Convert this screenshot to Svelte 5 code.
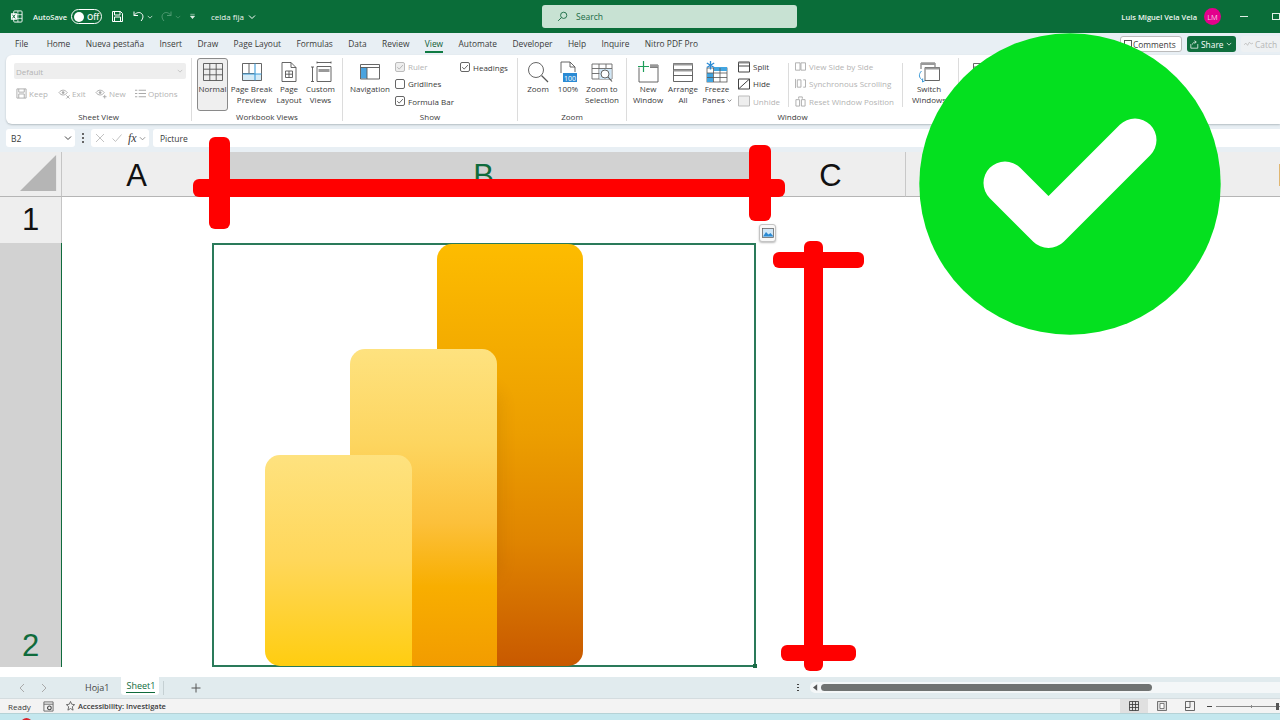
<script lang="ts">
  const tabs = ["File", "Home", "Nueva pestaña", "Insert", "Draw", "Page Layout", "Formulas", "Data", "Review", "View", "Automate", "Developer", "Help", "Inquire", "Nitro PDF Pro"];
</script>

{#snippet check(on: boolean, off = false)}
  <span class="box" class:off>
    {#if on}<svg viewBox="0 0 10 10" width="8" height="8"><path d="M1.5 5.2 4 7.6 8.6 2.6" fill="none" stroke={off ? "#aaa" : "#444"} stroke-width="1"/></svg>{/if}
  </span>
{/snippet}

{#snippet chevron(color = "#fff", size = 7)}
  <svg viewBox="0 0 8 8" width={size} height={size}><path d="M1 2.5 4 5.5 7 2.5" fill="none" stroke={color} stroke-width="1"/></svg>
{/snippet}

<div class="page">
  <header class="titlebar">
    <svg class="xl" viewBox="0 0 14 14" width="13" height="13">
      <rect x="4" y="1" width="9" height="12" rx="1" fill="none" stroke="#fff" stroke-width="1"/>
      <path d="M8.5 1v12M4 5h9M4 9h9" stroke="#fff" stroke-width=".8"/>
      <rect x="1" y="3.5" width="6.5" height="7" fill="#fff"/>
      <path d="M2.6 5l3 4M5.6 5l-3 4" stroke="#0b6b38" stroke-width="1"/>
    </svg>
    <span class="autosave">AutoSave</span>
    <span class="toggle"><i></i>Off</span>
    <svg class="qat save" viewBox="0 0 13 13" width="13" height="13"><path d="M1.5 1.5h8l2 2v8h-10zM3.5 1.5V5H9V1.5M3.5 11.5V7h6v4.5" fill="none" stroke="#fff" stroke-width="1"/></svg>
    <svg class="qat undo" viewBox="0 0 13 13" width="13" height="13"><path d="M2 1.5v4h4M2 5.5c2-3 5.5-3.8 7.5-2 2.2 2 1.8 5-.5 7.5" fill="none" stroke="#fff" stroke-width="1"/></svg>
    <span class="chev1">{@render chevron("#dfeee5", 6)}</span>
    <svg class="qat redo" viewBox="0 0 13 13" width="13" height="13"><path d="M11 1.5v4H7M11 5.5c-2-3-5.5-3.8-7.5-2-2.2 2-1.8 5 .5 7.5" fill="none" stroke="#4f9a72" stroke-width="1"/></svg>
    <span class="chev2">{@render chevron("#4f9a72", 6)}</span>
    <svg class="chev3" viewBox="0 0 8 8" width="7" height="7"><path d="M1.5 1.5h5M1.5 3.5h5L4 6.5z" fill="#dfeee5" stroke="#dfeee5" stroke-width=".6"/></svg>
    <span class="docname">celda fija</span>
    <span class="chev4">{@render chevron("#fff", 8)}</span>
    <div class="search">
      <svg viewBox="0 0 12 12" width="11" height="11"><circle cx="7.3" cy="4.7" r="3.4" fill="none" stroke="#1a6b45" stroke-width="1"/><path d="M4.8 7.2 1.2 10.8" stroke="#1a6b45" stroke-width="1"/></svg>
      <span>Search</span>
    </div>
    <span class="user">Luis Miguel Vela Vela</span>
    <span class="avatar">LM</span>
    <span class="minimize"></span>
    <span class="restore"></span>
  </header>

  <nav class="tabs">
    {#each tabs as tab}
      <span class="tab" class:current={tab === "View"}>{tab}</span>
    {/each}
    <div class="tab-actions">
      <span class="comments"><i></i>Comments</span>
      <span class="share">
        <svg viewBox="0 0 11 11" width="9" height="9"><path d="M1 5v5h8.5V5M3 5.5c.2-2 1.8-3 4-3M5.5.8 7.7 2.5 5.5 4.3" fill="none" stroke="#fff" stroke-width=".9"/></svg>
        Share {@render chevron("#fff", 6)}
      </span>
      <span class="catch">
        <svg viewBox="0 0 10 8" width="9" height="8"><path d="M0 5 2 3 4 5.5 6 2 8 4 10 3" fill="none" stroke="#bbb" stroke-width=".9"/></svg>
        Catch
      </span>
    </div>
  </nav>

  <section class="ribbon">
    <div class="group g-sheet">
      <div class="cmds sheet-cmds">
        <div class="dropdown"><span>Default</span>{@render chevron("#bbb", 6)}</div>
        <div class="sheet-row">
          <span class="dim"><svg viewBox="0 0 12 12" width="11" height="11"><path d="M1 1h10v10H1zM3 1v3.5h6V1M3 11V6.5h6V11" fill="none" stroke="#aaa"/></svg>Keep</span>
          <span class="dim"><svg viewBox="0 0 14 12" width="13" height="11"><path d="M1 5c2.5-3.5 6.5-3.5 9 0-2.5 3.5-6.5 3.5-9 0z" fill="none" stroke="#aaa"/><circle cx="5.5" cy="5" r="1.5" fill="#aaa"/><path d="M9 8l3.5 3.5M12.500 8 9 11.500" stroke="#aaa"/></svg>Exit</span>
          <span class="dim"><svg viewBox="0 0 14 12" width="13" height="11"><path d="M1 5c2.5-3.5 6.5-3.5 9 0-2.5 3.5-6.5 3.5-9 0z" fill="none" stroke="#aaa"/><circle cx="5.5" cy="5" r="1.5" fill="#aaa"/><path d="M10.5 7.5v4M8.5 9.5h4" stroke="#aaa"/></svg>New</span>
          <span class="dim"><svg viewBox="0 0 12 12" width="11" height="11"><path d="M4 2.5h8M4 6h8M4 9.5h8M0 2.5h2.5M0 6h2.5M0 9.5h2.5" stroke="#aaa" stroke-width="1.2"/></svg>Options</span>
        </div>
      </div>
      <div class="label">Sheet View</div>
    </div>

    <div class="group g-book">
      <div class="cmds">
        <div class="big w31 pressed">
          <svg viewBox="0 0 22 22" width="22" height="22"><path d="M1.5 2.5h19v17h-19zM1.5 8.2h19M1.5 13.8h19M7.8 2.5v17M14.2 2.5v17" fill="none" stroke="#555" stroke-width=".9"/></svg>
          <span>Normal</span>
        </div>
        <div class="big w45">
          <svg viewBox="0 0 22 22" width="22" height="22"><rect x="1.5" y="13" width="19" height="6.5" fill="#d5ebf7"/><path d="M1.5 2.5h19v17h-19zM1.5 12.5h12M8 2.5v10" fill="none" stroke="#555" stroke-width=".9"/><path d="M14 2.5v17M1.5 13h19" stroke="#3d9bd8" stroke-width="1.1"/></svg>
          <span>Page Break<br>Preview</span>
        </div>
        <div class="big w30">
          <svg viewBox="0 0 22 22" width="22" height="22"><path d="M4 1.5h9l5 5v14H4zM13 1.5v5h5" fill="none" stroke="#555" stroke-width=".9"/><path d="M7.5 10h7v6.5h-7zM7.5 13.2h7M11 10v6.5" fill="none" stroke="#555" stroke-width=".9"/></svg>
          <span>Page<br>Layout</span>
        </div>
        <div class="big w33">
          <svg viewBox="0 0 22 22" width="22" height="22"><path d="M7 1.5h14M7 .5v2M21 .5v2M1 6h3M1 20.5h3M2.5 6v14.5" fill="none" stroke="#555" stroke-width=".9"/><path d="M7 5.5h14v15H7z" fill="none" stroke="#555" stroke-width=".9"/><rect x="8.5" y="8" width="11" height="3" fill="#999"/></svg>
          <span>Custom<br>Views</span>
        </div>
      </div>
      <div class="label">Workbook Views</div>
    </div>

    <div class="group g-show">
      <div class="cmds">
        <div class="big w46">
          <svg viewBox="0 0 22 22" width="22" height="22"><rect x="2" y="6.5" width="6" height="11" fill="#4aa3df"/><path d="M1.5 3.5h19V18h-19zM1.5 6.5h19M8 6.5V18" fill="none" stroke="#555" stroke-width=".9"/></svg>
          <span>Navigation</span>
        </div>
        <div class="small-col w67">
          <span class="small dim">{@render check(true, true)}Ruler</span>
          <span class="small">{@render check(false)}Gridlines</span>
          <span class="small">{@render check(true)}Formula Bar</span>
        </div>
        <div class="small-col">
          <span class="small">{@render check(true)}Headings</span>
        </div>
      </div>
      <div class="label">Show</div>
    </div>

    <div class="group g-zoom">
      <div class="cmds">
        <div class="big w36">
          <svg viewBox="0 0 22 22" width="22" height="22"><circle cx="9" cy="9" r="7.5" fill="none" stroke="#555" stroke-width=".9"/><path d="M14.5 14.5 21 21" stroke="#555" stroke-width="1.2"/></svg>
          <span>Zoom</span>
        </div>
        <div class="big w24">
          <svg viewBox="0 0 22 22" width="22" height="22"><path d="M4 12V1h9l5 5v5M13 1v5h5" fill="none" stroke="#555" stroke-width=".9"/><rect x="6" y="12" width="14" height="9" fill="#2a8ad4"/><text x="13" y="19.5" text-anchor="middle" class="hundred">100</text></svg>
          <span>100%</span>
        </div>
        <div class="big w44">
          <svg viewBox="0 0 22 22" width="22" height="22"><path d="M1 3h20v15H1zM1 7.5h20M1 12.5h8M8 3v15M15 3v4" fill="none" stroke="#666" stroke-width=".9"/><rect x="8.5" y="8" width="12" height="10" fill="#cfe6f6"/><circle cx="14" cy="13" r="4" fill="#fff" stroke="#555" stroke-width=".9"/><path d="M17 16 21 20.5" stroke="#555" stroke-width="1.1"/></svg>
          <span>Zoom to<br>Selection</span>
        </div>
      </div>
      <div class="label">Zoom</div>
    </div>

    <div class="group g-window">
      <div class="cmds">
        <div class="big w34">
          <svg viewBox="0 0 22 22" width="22" height="22"><path d="M2 6.5V21h19V4h-8M13 6.5h8" fill="none" stroke="#555" stroke-width=".9"/><rect x="13" y="4" width="8" height="2.5" fill="#999"/><path d="M6.5 0v11M1 5.5h11" stroke="#1e9e5a" stroke-width="1.2"/></svg>
          <span>New<br>Window</span>
        </div>
        <div class="big w36">
          <svg viewBox="0 0 22 22" width="22" height="22"><path d="M1.5 2.5h19v18h-19zM1.5 8.5h19M1.5 14.5h19" fill="none" stroke="#555" stroke-width=".9"/><rect x="1.5" y="2.5" width="19" height="2" fill="#999"/><rect x="1.5" y="8.5" width="19" height="2" fill="#999"/></svg>
          <span>Arrange<br>All</span>
        </div>
        <div class="big w32">
          <svg viewBox="0 0 22 22" width="22" height="22"><rect x="1" y="7" width="20" height="14" fill="#fff" stroke="#555" stroke-width=".8"/><rect x="1" y="12" width="6" height="9" fill="#42a5e0"/><rect x="8" y="6" width="13" height="4" fill="#42a5e0"/><path d="M1 12h20M1 16.5h20M7.5 7v14M14 7v14" stroke="#555" stroke-width=".8"/><path d="M4.5 0v8.5M.8 2 8.2 6.5M8.2 2 .8 6.5" stroke="#2a8ad4" stroke-width="1.3"/></svg>
          <span>Freeze<br>Panes <span class="inline-chev">{@render chevron("#444", 5)}</span></span>
        </div>
        <div class="small-col w55">
          <span class="small">
            <svg viewBox="0 0 12 12" width="12" height="12"><path d="M.5 1h11v10H.5zM.5 5h11" fill="none" stroke="#444"/><rect x=".5" y="1" width="11" height="1.5" fill="#888"/></svg>
            Split
          </span>
          <span class="small">
            <svg viewBox="0 0 12 12" width="12" height="12"><path d="M.5 1h11v10H.5zM.5 11 11.5 1" fill="none" stroke="#444"/></svg>
            Hide
          </span>
          <span class="small dim">
            <svg viewBox="0 0 12 12" width="12" height="12"><path d="M.5 1h11v10H.5z" fill="#eee" stroke="#bbb"/></svg>
            Unhide
          </span>
        </div>
        <span class="vsep"></span>
        <div class="small-col w107">
          <span class="small dim"><svg viewBox="0 0 12 12" width="11" height="11"><path d="M.5 2h5v8h-5zM6.5 2h5v8h-5z" fill="none" stroke="#aaa"/></svg>View Side by Side</span>
          <span class="small dim"><svg viewBox="0 0 12 12" width="11" height="11"><path d="M2.5 2h4v8h-4zM.5 1v10M9 2h2.5v8H9" fill="none" stroke="#aaa"/></svg>Synchronous Scrolling</span>
          <span class="small dim"><svg viewBox="0 0 12 12" width="11" height="11"><path d="M1 4h4v7H1zM7 4h4v7H7zM4 1h4M4 1v2M8 1v2" fill="none" stroke="#aaa"/></svg>Reset Window Position</span>
        </div>
        <span class="vsep"></span>
        <div class="big w40">
          <svg viewBox="0 0 22 22" width="22" height="22"><path d="M3 8V2h14v4" fill="none" stroke="#555" stroke-width=".9"/><rect x="3" y="2" width="14" height="2" fill="#999"/><path d="M7 6.5h14.5v13H7z" fill="#fff" stroke="#555" stroke-width=".9"/><rect x="7" y="6.5" width="14.5" height="2" fill="#999"/><path d="M3.5 10c-3 3-3 7 1.5 9.5M7 19.5 4.5 21l.2-3.5" fill="none" stroke="#3d9bd8" stroke-width="1"/></svg>
          <span>Switch<br>Windows</span>
        </div>
      </div>
      <div class="label">Window</div>
    </div>

    <div class="group g-macros">
      <div class="cmds">
        <div class="big w40">
          <svg viewBox="0 0 22 22" width="22" height="22"><path d="M1.5 2.5h19v17h-19zM1.5 6h19" fill="none" stroke="#555" stroke-width=".9"/></svg>
          <span>Macros</span>
        </div>
      </div>
    </div>
  </section>

  <div class="formula-bar">
    <div class="namebox"><span>B2</span>{@render chevron("#444", 8)}</div>
    <span class="fdots"></span>
    <div class="fbuttons">
      <svg viewBox="0 0 10 10" width="10" height="10"><path d="M1 1l8 8M9 1l-8 8" stroke="#bbb" stroke-width=".9"/></svg>
      <svg viewBox="0 0 10 10" width="10" height="10"><path d="M.5 5.5 3.5 8.5 9.5 1.5" fill="none" stroke="#bbb" stroke-width=".9"/></svg>
      <span class="fx">fx</span>
      {@render chevron("#888", 7)}
    </div>
    <div class="finput">Picture</div>
  </div>

  <div class="sheet">
    <div class="head corner">
      <svg viewBox="0 0 40 40" width="38" height="38"><path d="M0 38 38 38 38 0z" fill="#b5b5b5"/></svg>
    </div>
    <div class="head col">A</div>
    <div class="head col selected">B</div>
    <div class="head col">C</div>
    <div class="head col">D</div>

    <div class="head row">1</div>
    <div class="cells"></div>

    <div class="head row selected">2</div>
    <div class="cells">
      <div class="picture-cell">
        <svg class="logo" viewBox="0 0 318 422" width="318" height="422">
          <defs>
            <linearGradient id="barBig" x1="0" y1="0" x2="0" y2="1">
              <stop offset="0" stop-color="#fdbc00"/>
              <stop offset=".45" stop-color="#ec9e00"/>
              <stop offset=".7" stop-color="#e08500"/>
              <stop offset="1" stop-color="#c85900"/>
            </linearGradient>
            <linearGradient id="barMid" x1="0" y1="0" x2="0" y2="1">
              <stop offset="0" stop-color="#fee27f"/>
              <stop offset=".3" stop-color="#fdd55f"/>
              <stop offset=".55" stop-color="#fcc03a"/>
              <stop offset=".75" stop-color="#f8ae00"/>
              <stop offset="1" stop-color="#f29c00"/>
            </linearGradient>
            <linearGradient id="barLeft" x1="0" y1="0" x2="0" y2="1">
              <stop offset="0" stop-color="#fee27f"/>
              <stop offset=".5" stop-color="#ffd75a"/>
              <stop offset="1" stop-color="#ffcd10"/>
            </linearGradient>
            <filter id="soft" x="-30%" y="-30%" width="160%" height="160%">
              <feGaussianBlur stdDeviation="9"/>
            </filter>
            <clipPath id="bigClip">
              <rect x="172" y="0" width="146" height="422" rx="15"/>
            </clipPath>
          </defs>
          <rect x="172" y="0" width="146" height="422" rx="15" fill="url(#barBig)"/>
          <g clip-path="url(#bigClip)">
            <rect x="100" y="145" width="134" height="190" rx="15" fill="#7a3c00" opacity=".16" filter="url(#soft)"/>
          </g>
          <path d="M85 422V120a15 15 0 0 1 15-15h117a15 15 0 0 1 15 15v302z" fill="url(#barMid)"/>
          <path d="M0 407V226a15 15 0 0 1 15-15h117a15 15 0 0 1 15 15v196H15a15 15 0 0 1-15-15z" fill="url(#barLeft)"/>
        </svg>
        <span class="fill-handle"></span>
      </div>
    </div>
  </div>

  <div class="gap-row"></div>

  <div class="sheet-tabs">
    <svg class="nav" viewBox="0 0 8 10" width="8" height="10"><path d="M6 1 2 5l4 4" fill="none" stroke="#aaa"/></svg>
    <svg class="nav next" viewBox="0 0 8 10" width="8" height="10"><path d="M2 1l4 4-4 4" fill="none" stroke="#aaa"/></svg>
    <span class="stab">Hoja1</span>
    <span class="stab current-sheet"><b>Sheet1</b></span>
    <span class="stab-sep"></span>
    <svg class="plus" viewBox="0 0 10 10" width="10" height="10"><path d="M5 .5v9M.5 5h9" stroke="#555"/></svg>
    <span class="scroll-dots"></span>
    <div class="scrollbar">
      <svg viewBox="0 0 6 8" width="5" height="7"><path d="M5 0v8L0 4z" fill="#555"/></svg>
      <span class="thumb"></span>
    </div>
  </div>

  <footer class="status">
    <span class="ready">Ready</span>
    <svg class="st-macro" viewBox="0 0 12 12" width="11" height="11"><path d="M1 1h10v10H1zM1 3.5h10" fill="none" stroke="#666"/><circle cx="7" cy="7.5" r="2" fill="none" stroke="#444" stroke-width="1.2"/></svg>
    <svg class="st-access" viewBox="0 0 12 12" width="11" height="11"><path d="M6 .5 7.3 3.5 10.500 4 8 6.200 8.800 10 6 8.200 3.200 10 4 6.200 1.500 4 4.700 3.500z" fill="none" stroke="#555" stroke-width=".9"/></svg>
    <span class="access">Accessibility: Investigate</span>
    <div class="views">
      <span class="view on"><svg viewBox="0 0 10 10" width="10" height="10"><path d="M.5.5h9v9h-9zM.5 3.5h9M.5 6.5h9M3.5.5v9M6.5.5v9" fill="none" stroke="#333" stroke-width=".8"/></svg></span>
      <span class="view"><svg viewBox="0 0 10 10" width="10" height="10"><path d="M.5.5h9v9h-9z" fill="#ddd" stroke="#555" stroke-width=".8"/><path d="M3 2.5h4v5H3z" fill="#fff" stroke="#555" stroke-width=".7"/></svg></span>
      <span class="view"><svg viewBox="0 0 10 10" width="10" height="10"><path d="M.5.5h9v9h-9zM.5 6.5H5V.5" fill="none" stroke="#444" stroke-width=".8"/></svg></span>
    </div>
    <div class="zoom-slider">
      <span class="minus"></span>
      <span class="track"><i class="tick"></i><i class="knob"></i></span>
    </div>
  </footer>
  <div class="strip"></div>

  <!-- annotations drawn over the screenshot -->
  <span class="mark h1"></span>
  <span class="mark v1"></span>
  <span class="mark v2"></span>
  <span class="mark v3"></span>
  <span class="mark h2"></span>
  <span class="mark h3"></span>
  <span class="pic-btn">
    <svg viewBox="0 0 12 10" width="12" height="10"><rect x=".5" y=".5" width="11" height="9" fill="#cfe6f6" stroke="#555" stroke-width=".7"/><path d="M1 8.5 4 4l2.5 2.5L8.5 5l3 3.5z" fill="#2a8ad4"/></svg>
  </span>
  <svg class="badge" viewBox="0 0 302 302" width="302" height="302">
    <circle cx="151" cy="151" r="150.7" fill="#04e01f"/>
    <path d="M86 150 129.500 193.500 216 107" fill="none" stroke="#fff" stroke-width="43" stroke-linecap="round" stroke-linejoin="round"/>
  </svg>
  <span class="red-dot"></span>
</div>

<style>
  :global(body) {
    margin: 0;
    background: #fff;
  }

  .page {
    position: relative;
    width: 1280px;
    height: 720px;
    overflow: hidden;
    font-family: "Open Sans", "Noto Sans", sans-serif;
    font-size: 8px;
    color: #3a3a3a;
    background: #e8eff4;
  }

  svg {
    display: block;
    flex: none;
  }

  /* title bar */
  .titlebar {
    display: flex;
    align-items: center;
    height: 33px;
    background: #0a6d39;
    color: #eef6f1;
  }

  .xl { margin-left: 10px; }
  .autosave { margin-left: 10px; font-size: 7.5px; font-weight: 600; width: 38px; white-space: nowrap; }
  .toggle {
    display: flex;
    align-items: center;
    gap: 3px;
    box-sizing: border-box;
    width: 31px;
    height: 15px;
    padding-left: 2px;
    border: 1px solid #fff;
    border-radius: 8px;
    font-size: 8px;
    font-weight: 600;
  }
  .toggle i {
    width: 10px;
    height: 10px;
    border-radius: 50%;
    background: #fff;
  }
  .save { margin-left: 9px; }
  .undo { margin-left: 8px; }
  .chev1 { margin-left: 2px; }
  .redo { margin-left: 7px; }
  .chev2 { margin-left: 2px; }
  .chev3 { margin-left: 8px; }
  .docname { margin-left: 15px; width: 35px; white-space: nowrap; }
  .chev4 { margin-left: 2px; }
  .search {
    display: flex;
    align-items: center;
    gap: 8px;
    box-sizing: border-box;
    width: 255px;
    height: 23px;
    margin-left: 286px;
    padding-left: 15px;
    background: #c8e2d3;
    border-radius: 3px;
    color: #1a6b45;
    font-size: 8.5px;
  }
  .user { margin-left: auto; font-weight: 600; white-space: nowrap; font-size: 7.5px; }
  .avatar {
    display: grid;
    place-items: center;
    width: 17px;
    height: 17px;
    margin-left: 7px;
    border-radius: 50%;
    background: #e3008c;
    color: #f7c6e2;
    font-size: 7.5px;
  }
  .minimize {
    width: 8px;
    height: 1px;
    margin-left: 19px;
    background: #dfeee5;
  }
  .restore {
    box-sizing: border-box;
    width: 8px;
    height: 7px;
    margin-left: 24px;
    border: 1px solid #dfeee5;
  }

  /* tab strip */
  .tabs {
    display: flex;
    align-items: center;
    gap: 15.4px;
    height: 22px;
    padding-left: 15px;
    font-size: 8.4px;
    white-space: nowrap;
  }
  .tab { position: relative; line-height: 22px; }
  .tab:first-child { margin-right: 3px; }
  .tab.current { color: #0f5c35; font-weight: 500; }
  .tab.current::after {
    content: "";
    position: absolute;
    left: 0;
    right: 0;
    bottom: 2px;
    height: 2px;
    background: #0f7b43;
  }
  .tab-actions {
    display: flex;
    align-items: center;
    gap: 5px;
    margin-left: auto;
    margin-right: -1px;
  }
  .comments, .share, .catch {
    display: flex;
    align-items: center;
    box-sizing: border-box;
    height: 16px;
    border-radius: 3px;
  }
  .comments {
    gap: 1px;
    width: 62px;
    padding-left: 3px;
    background: #fff;
    border: 1px solid #bbb;
  }
  .comments i {
    box-sizing: border-box;
    width: 8px;
    height: 8px;
    border: 1px solid #555;
  }
  .share {
    gap: 2px;
    width: 49px;
    padding-left: 3px;
    background: #0f6e3d;
    color: #fff;
  }
  .catch {
    gap: 2px;
    width: 40px;
    padding-left: 3px;
    background: #eef1f3;
    color: #b5b5b5;
  }

  /* ribbon */
  .ribbon {
    display: flex;
    box-sizing: border-box;
    height: 69px;
    margin-left: 6px;
    background: #fff;
    border-radius: 6px 0 0 6px;
    box-shadow: 0 1px 2px #b4bdc2;
  }
  .group {
    box-sizing: border-box;
    display: flex;
    flex-direction: column;
    height: 63px;
    margin-top: 3px;
    border-right: 1px solid #dcdcdc;
  }
  .g-sheet { width: 186px; }
  .g-book { width: 151px; }
  .g-show { width: 175px; }
  .g-zoom { width: 109px; }
  .g-window { width: 332px; }
  .g-macros { width: 60px; border-right: 0; }
  .g-book .cmds { padding-left: 5px; }
  .g-show .cmds { padding-left: 4px; }
  .g-zoom .cmds { padding-left: 2px; }
  .g-window .cmds { padding-left: 4px; }
  .g-macros .cmds { padding-left: 4px; }

  .cmds {
    display: flex;
    height: 52px;
  }
  .label {
    margin-top: auto;
    margin-bottom: -1px;
    line-height: 11px;
    text-align: center;
    white-space: nowrap;
  }

  .big {
    display: flex;
    flex-direction: column;
    align-items: center;
    box-sizing: border-box;
    height: 53px;
    padding-top: 3px;
    text-align: center;
    line-height: 11.5px;
    white-space: nowrap;
  }
  .big span { margin-top: -.5px; }
  .big span.inline-chev { display: inline-block; margin: 0; }
  .pressed {
    background: #efefef;
    border: 1px solid #8a8a8a;
    border-radius: 3px;
    padding-top: 2px;
  }
  .w24 { width: 24px; }
  .w30 { width: 30px; }
  .w31 { width: 31px; }
  .w32 { width: 32px; }
  .w33 { width: 33px; }
  .w34 { width: 34px; }
  .w36 { width: 36px; }
  .w40 { width: 40px; }
  .w44 { width: 44px; }
  .w45 { width: 45px; margin-left: 1px; }
  .w46 { width: 46px; }
  .w55 { width: 55px; padding-left: 5px; }
  .w67 { width: 67px; padding-left: 2px; }
  .w107 { width: 107px; }

  .small-col {
    display: flex;
    flex-direction: column;
    box-sizing: border-box;
  }
  .small {
    display: flex;
    align-items: center;
    gap: 3px;
    height: 18px;
    white-space: nowrap;
  }
  .dim { color: #b3b3b3; }
  .box {
    display: grid;
    place-items: center;
    box-sizing: border-box;
    width: 10px;
    height: 10px;
    background: #fff;
    border: 1px solid #666;
    border-radius: 2px;
  }
  .box.off { background: #eee; border-color: #bbb; }
  .vsep {
    width: 1px;
    height: 44px;
    margin: 5px 6px 0 0;
    background: #dcdcdc;
  }

  .sheet-cmds {
    flex-direction: column;
    padding: 5px 5px 0 8px;
  }
  .dropdown {
    display: flex;
    align-items: center;
    justify-content: space-between;
    box-sizing: border-box;
    width: 172px;
    height: 16px;
    padding: 0 3px 0 2px;
    background: #eeeeee;
    border-radius: 2px;
    color: #b3b3b3;
  }
  .sheet-row {
    display: flex;
    margin-top: 7px;
    padding-left: 2px;
  }
  .sheet-row span {
    display: flex;
    align-items: center;
    gap: 2px;
    height: 14px;
  }
  .sheet-row span:nth-child(1) { width: 42px; }
  .sheet-row span:nth-child(2) { width: 37px; gap: 1px; }
  .sheet-row span:nth-child(3) { width: 40px; gap: 1px; }

  .hundred {
    font-family: "Open Sans", sans-serif;
    font-size: 7px;
    fill: #fff;
  }

  /* formula bar */
  .formula-bar {
    display: flex;
    align-items: center;
    gap: 4px;
    height: 18px;
    margin-top: 5px;
    padding-left: 6px;
    font-size: 8.5px;
  }
  .namebox {
    display: flex;
    align-items: center;
    justify-content: space-between;
    box-sizing: border-box;
    width: 69px;
    height: 18px;
    padding: 0 3px 0 5px;
    background: #fff;
    border-radius: 3px;
  }
  .fdots {
    width: 2px;
    height: 10px;
    margin: 0 3px;
    background: repeating-linear-gradient(#666 0 2px, transparent 2px 4px);
  }
  .fbuttons {
    display: flex;
    align-items: center;
    gap: 7px;
    box-sizing: border-box;
    width: 58px;
    height: 18px;
    padding-left: 4px;
    background: #fff;
    border-radius: 3px;
  }
  .fx {
    font-family: "Liberation Serif", serif;
    font-style: italic;
    font-size: 12px;
    margin-left: -1px;
    margin-right: -5px;
  }
  .finput {
    flex: 1;
    display: flex;
    align-items: center;
    height: 18px;
    padding-left: 7px;
    background: #fff;
    border-radius: 3px 0 0 3px;
  }

  /* grid */
  .sheet {
    display: grid;
    grid-template-columns: 62px 150px 544px 150px 766px;
    grid-template-rows: 45px 46px 424px;
    margin-top: 5px;
    background: #fff;
    font-family: "Liberation Sans", sans-serif;
    color: #111;
  }
  .head {
    box-sizing: border-box;
    display: grid;
    place-items: center;
    background: #eeeeee;
    font-size: 31px;
  }
  .corner {
    justify-items: end;
    padding-right: 3px;
    border-bottom: 1px solid #b5b5b5;
    border-right: 1px solid #c5c5c5;
  }
  .col {
    padding-top: 3px;
    border-bottom: 1px solid #b5b5b5;
    border-right: 1px solid #c8c8c8;
    line-height: 1;
  }
  .col.selected {
    background: #d2d2d2;
    color: #0f6b3c;
    border-bottom: 1px solid #0f6b3c;
  }
  .row { border-right: 1px solid #c5c5c5; }
  .row.selected {
    background: #d2d2d2;
    color: #0f6b3c;
    align-items: end;
    padding-bottom: 6px;
    line-height: 1;
    border-right: 1px solid #0f6b3c;
  }
  .cells {
    grid-column: 2 / -1;
    display: grid;
    grid-template-columns: 150px 544px;
  }
  .picture-cell {
    grid-column: 2;
    position: relative;
    box-sizing: border-box;
    border: 2px solid #2a7a5a;
  }
  .logo {
    position: absolute;
    left: 51px;
    top: -1px;
  }
  .fill-handle {
    position: absolute;
    right: -3px;
    bottom: -3px;
    width: 4px;
    height: 4px;
    background: #1a6b45;
  }
  .gap-row {
    height: 10px;
    background: #fff;
  }

  /* sheet tabs */
  .sheet-tabs {
    display: flex;
    align-items: center;
    height: 21px;
    background: #e1ebee;
    font-size: 9px;
  }
  .nav { margin-left: 18px; }
  .nav.next { margin-left: 14px; }
  .stab { margin-left: 37px; color: #444; }
  .stab.current-sheet {
    box-sizing: border-box;
    align-self: flex-start;
    width: 38px;
    height: 18px;
    margin-left: 12px;
    padding: 0 5px;
    background: #fff;
    border-radius: 0 0 3px 3px;
    line-height: 17px;
    color: #0f6b3c;
    position: relative;
  }
  .stab.current-sheet b { font-weight: 500; white-space: nowrap; }
  .stab.current-sheet::after {
    content: "";
    position: absolute;
    left: 5px;
    right: 4px;
    bottom: 2px;
    height: 1.5px;
    background: #0f6b3c;
  }
  .stab-sep {
    width: 1px;
    height: 14px;
    margin-left: 4px;
    background: #c5d0d3;
  }
  .plus { margin-left: 27px; }
  .scroll-dots {
    width: 2px;
    height: 8px;
    margin-left: 596px;
    background: repeating-linear-gradient(#444 0 1.5px, transparent 1.5px 3px);
  }
  .scrollbar {
    display: flex;
    align-items: center;
    gap: 3px;
    box-sizing: border-box;
    flex: 1;
    height: 11px;
    margin-left: 11px;
    padding-left: 3px;
    background: #f4f7f8;
    border-radius: 5px 0 0 5px;
  }
  .thumb {
    width: 331px;
    height: 7px;
    border-radius: 4px;
    background: #707372;
  }

  /* status bar */
  .status {
    display: flex;
    align-items: center;
    box-sizing: border-box;
    height: 16px;
    background: #f3f3f3;
    border-top: 1px solid #d4dcdf;
    border-bottom: 1px solid #b5d2d6;
  }
  .ready { margin-left: 8px; width: 35px; }
  .st-access { margin-left: 11px; }
  .access { margin-left: 2px; font-size: 7.5px; font-weight: 600; white-space: nowrap; }
  .views {
    display: flex;
    height: 100%;
    margin-left: auto;
  }
  .view {
    display: grid;
    place-items: center;
    width: 28px;
  }
  .view.on { background: #e0e0e0; }
  .zoom-slider {
    display: flex;
    align-items: center;
    width: 76px;
    padding-left: 3px;
    box-sizing: border-box;
  }
  .minus {
    width: 5px;
    height: 1px;
    background: #444;
  }
  .track {
    position: relative;
    flex: 1;
    height: 1px;
    margin-left: 4px;
    background: #888;
  }
  .tick {
    position: absolute;
    left: 35px;
    top: -1px;
    width: 1px;
    height: 3px;
    background: #888;
  }
  .knob {
    position: absolute;
    left: 60px;
    top: -3px;
    width: 3px;
    height: 7px;
    background: #555;
  }
  .strip {
    height: 6px;
    background: #c4e7ee;
  }

  /* annotations */
  .mark {
    position: absolute;
    background: #ff0000;
    border-radius: 6px;
  }
  .h1 { left: 193px; top: 179px; width: 592px; height: 18px; }
  .v1 { left: 209px; top: 137px; width: 21px; height: 92px; }
  .v2 { left: 749px; top: 145px; width: 22px; height: 76px; }
  .v3 { left: 804px; top: 241px; width: 19px; height: 430px; }
  .h2 { left: 773px; top: 252px; width: 91px; height: 16px; }
  .h3 { left: 781px; top: 645px; width: 75px; height: 16px; }
  .pic-btn {
    position: absolute;
    left: 759px;
    top: 224px;
    display: grid;
    place-items: center;
    box-sizing: border-box;
    width: 17px;
    height: 18px;
    background: #f8f8f8;
    border: 1px solid #c4c4c4;
    border-radius: 3px;
    box-shadow: 0 1px 2px #bbb;
  }
  .badge {
    position: absolute;
    left: 919px;
    top: 33px;
  }
  .red-dot {
    position: absolute;
    left: 21px;
    top: 718px;
    width: 11px;
    height: 11px;
    border-radius: 50%;
    background: #d8232a;
  }
</style>
